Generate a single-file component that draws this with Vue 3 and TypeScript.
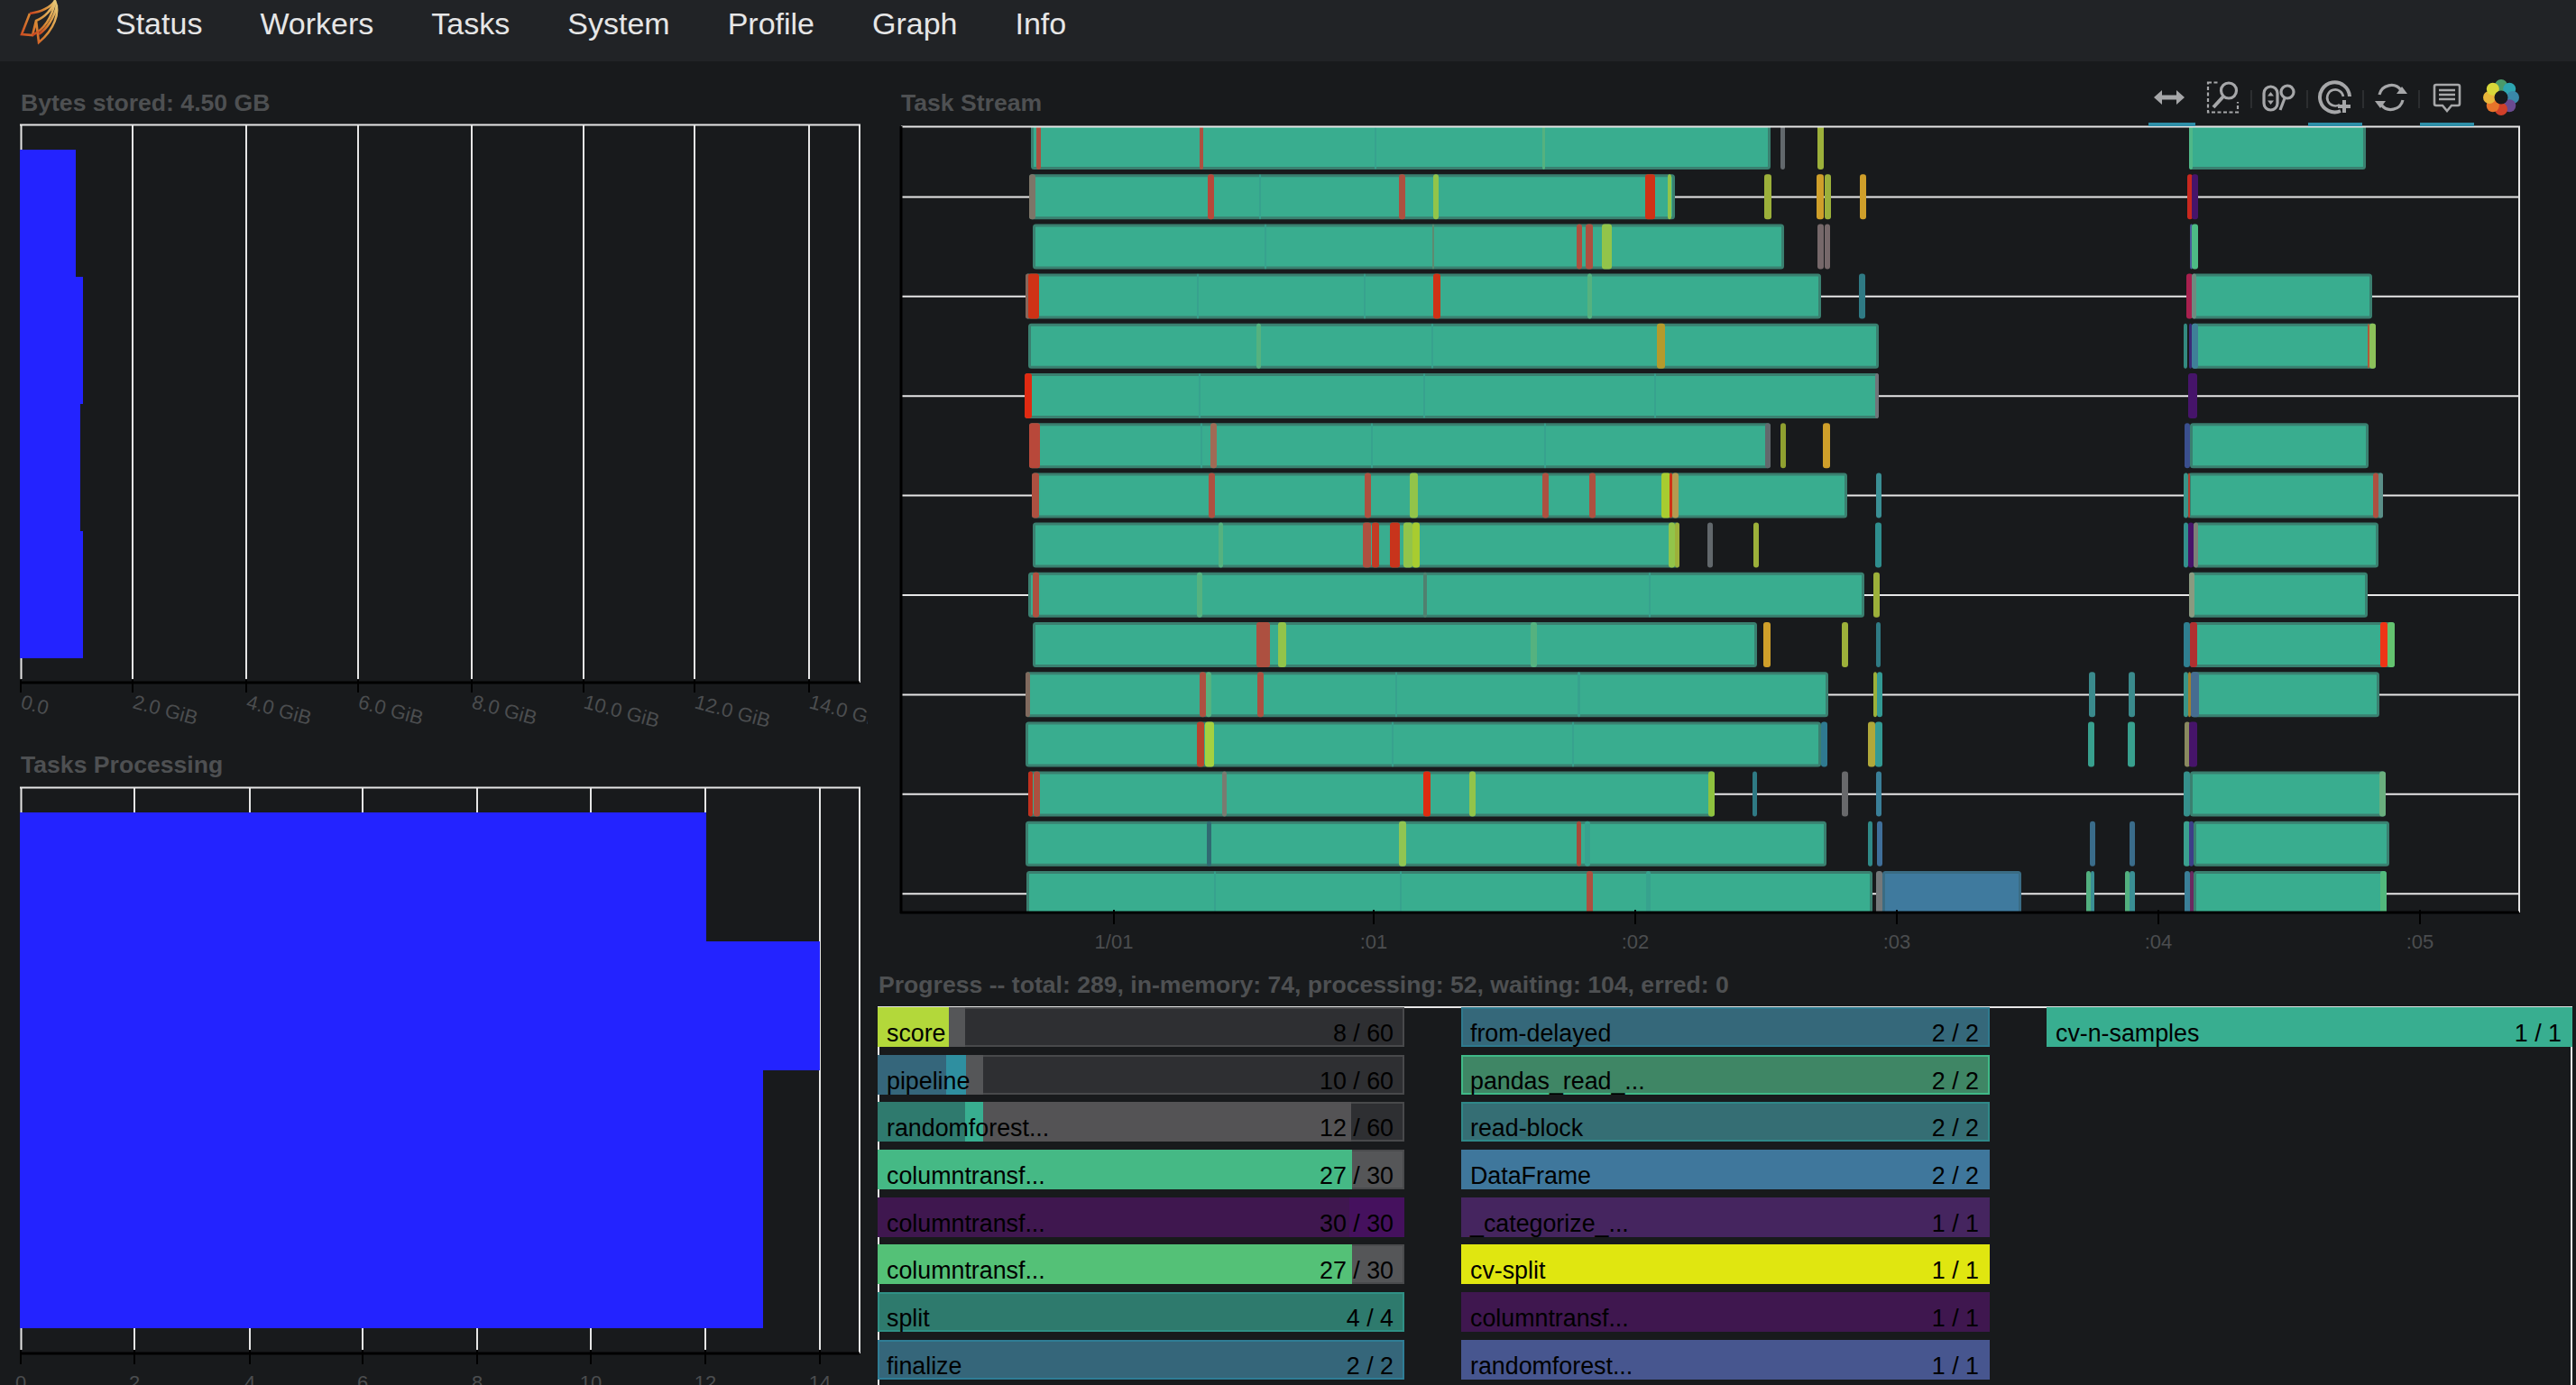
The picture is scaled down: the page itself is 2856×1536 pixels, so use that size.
<script setup lang="ts">
type Seg = [number, number, string, string?]
type Fill = [number, string]
interface Bar {
  name: string
  count: string
  track: string
  edge: string
  fills?: Fill[]
}

const links = ['Status', 'Workers', 'Tasks', 'System', 'Profile', 'Graph', 'Info']

// bytes + processing charts, x in page pixels
const bytesGrid = [147, 273, 397, 523, 647, 770, 897]
const bytesTicks = [
  { x: 23, label: '0.0' },
  { x: 147, label: '2.0 GiB' },
  { x: 273, label: '4.0 GiB' },
  { x: 397, label: '6.0 GiB' },
  { x: 523, label: '8.0 GiB' },
  { x: 647, label: '10.0 GiB' },
  { x: 770, label: '12.0 GiB' },
  { x: 897, label: '14.0 GiB' },
]
const bytesBars = [
  { y: 166, h: 141, r: 84 },
  { y: 307, h: 141, r: 92 },
  { y: 448, h: 141, r: 89 },
  { y: 589, h: 141, r: 92 },
]
const procTicks = [
  { x: 23, label: '0' },
  { x: 149, label: '2' },
  { x: 277, label: '4' },
  { x: 402, label: '6' },
  { x: 529, label: '8' },
  { x: 655, label: '10' },
  { x: 782, label: '12' },
  { x: 909, label: '14' },
]
const procBars = [
  { y: 901, h: 143, r: 783 },
  { y: 1044, h: 143, r: 909 },
  { y: 1187, h: 286, r: 846 },
]

// task stream colours
const T = '#39ad8f'
const E = '#3a8070'
const R = '#ad5040'
const RB = '#cf3216'
const L = '#92c44a'
const LB = '#a8cc30'
const O = '#9cb03a'
const OR = '#cf9f2a'
const G = '#62686c'
const P = '#46146a'
const F1 = '#37a28e'
const F2 = '#55b27f'
const DT = '#2f7a84'
const BT = '#3a7f98'

const stream: Seg[][] = [
  [
    [1143, 1963, T, E], [1149, 1154, R], [1330, 1334, R], [1524, 1526, F1], [1710, 1713, F2],
    [1974, 1979, G], [2015, 2022, O], [2427, 2623, T, E], [2427, 2431, '#4fb888'],
  ],
  [
    [1141, 1857, T, E], [1141, 1148, '#7d7568'], [1339, 1346, '#b8483a'], [1396, 1398, F1], [1551, 1558, R],
    [1589, 1595, L], [1824, 1835, RB], [1849, 1853, L], [1956, 1964, O], [2014, 2022, OR], [2023, 2030, O],
    [2062, 2069, OR], [2425, 2431, '#c8281e'], [2430, 2437, P],
  ],
  [
    [1145, 1978, T, E], [1402, 1404, F1], [1588, 1590, '#5e8a70'], [1748, 1754, R], [1758, 1766, R],
    [1776, 1787, L], [2015, 2022, '#76686a'], [2023, 2029, '#76686a'], [2428, 2431, '#4a5c9a'], [2430, 2437, '#4dbb85'],
  ],
  [
    [1137, 2019, T, E], [1137, 1142, '#86665a'], [1140, 1152, RB], [1327, 1329, F1], [1512, 1514, F1],
    [1589, 1597, RB], [1760, 1765, F2], [2061, 2068, DT], [2424, 2431, '#a8204e'], [2430, 2630, T, E], [2430, 2435, '#6f8a80'],
  ],
  [
    [1140, 2083, T, E], [1393, 1398, F2], [1587, 1589, F1], [1837, 1846, '#b59a2c'], [2421, 2425, '#338a80'],
    [2427, 2430, '#3c2a78'], [2430, 2634, T, E], [2430, 2437, '#3f7f98'], [2625, 2627, '#b05a3a'], [2627, 2634, '#8cc15a'],
  ],
  [
    [1136, 2083, T, E], [1136, 1144, '#e02a12'], [1329, 1331, F1], [1578, 1580, F1], [1834, 1836, F1],
    [2079, 2083, '#70757a'], [2426, 2436, P],
  ],
  [
    [1141, 1963, T, E], [1141, 1153, '#b8483a'], [1331, 1333, F1], [1342, 1349, '#a06a55'], [1520, 1522, F1],
    [1712, 1714, F1], [1957, 1963, G], [1974, 1980, '#8fa030'], [2021, 2029, OR], [2422, 2428, '#3a4f8e'],
    [2428, 2626, T, E],
  ],
  [
    [1144, 2048, T, E], [1144, 1152, R], [1340, 1347, R], [1513, 1520, R], [1563, 1572, L], [1710, 1717, R],
    [1762, 1769, R], [1842, 1852, LB], [1851, 1854, RB], [1854, 1861, '#b59a50'], [2080, 2086, '#3a8f94'],
    [2421, 2426, '#3a9488'], [2426, 2642, T, E], [2426, 2428, '#b04030'], [2631, 2637, R], [2637, 2642, '#5a8f88'],
  ],
  [
    [1145, 1862, T, E], [1351, 1356, F2], [1511, 1520, R], [1521, 1529, '#c23a25'], [1541, 1552, '#c8341c'],
    [1556, 1566, L], [1566, 1574, LB], [1850, 1857, L], [1857, 1862, O], [1893, 1899, G], [1944, 1950, O],
    [2079, 2086, '#2f8e8e'], [2421, 2426, '#33908c'], [2426, 2432, P], [2432, 2637, T, E], [2432, 2437, '#7d8078'],
  ],
  [
    [1140, 2067, T, E], [1145, 1152, R], [1327, 1333, F2], [1578, 1582, '#50806f'], [1828, 1830, F1],
    [2077, 2084, O], [2427, 2625, T, E], [2427, 2433, '#8a9a80'],
  ],
  [
    [1145, 1948, T, E], [1393, 1408, R], [1417, 1426, L], [1697, 1704, F2], [1955, 1963, OR], [2042, 2049, O],
    [2080, 2085, DT], [2421, 2428, '#2f7f90'], [2428, 2655, T, E], [2428, 2436, '#b03030'],
    [2639, 2647, '#ef3416'], [2647, 2655, '#63c36f'],
  ],
  [
    [1137, 2027, T, E], [1137, 1142, '#806a5e'], [1330, 1337, R], [1337, 1343, F2], [1394, 1401, R],
    [1547, 1549, F1], [1749, 1752, F1], [2077, 2081, O], [2081, 2087, '#339a94'], [2316, 2323, '#3a8a8c'],
    [2360, 2367, '#3a8a8c'], [2421, 2426, '#3a9488'], [2426, 2429, '#a08030'], [2429, 2638, T, E], [2429, 2438, '#466c90'],
  ],
  [
    [1137, 2019, T, E], [1327, 1335, '#b8432e'], [1336, 1346, '#a5d040'], [1543, 1545, F1], [1743, 1745, F1],
    [2019, 2026, '#2f7a90'], [2071, 2079, '#b0a83a'], [2079, 2087, '#339a94'], [2315, 2322, '#38a08e'],
    [2359, 2367, '#38a08e'], [2422, 2428, '#8a8a60'], [2427, 2436, P],
  ],
  [
    [1140, 1901, T, E], [1140, 1145, '#c0301e'], [1146, 1153, R], [1355, 1360, '#7a7a70'], [1578, 1586, '#dc2c10'],
    [1629, 1636, L], [1894, 1901, '#8fc23e'], [1943, 1948, DT], [2042, 2049, '#68696b'], [2080, 2086, BT],
    [2421, 2428, '#35908c'], [2428, 2645, T, E], [2638, 2645, '#6aaf7e'],
  ],
  [
    [1137, 2025, T, E], [1338, 1343, '#306a72'], [1551, 1559, '#90c552'], [1748, 1753, '#a84a3a'], [1757, 1763, F1],
    [2071, 2076, '#2f8a88'], [2081, 2087, '#3f6f9a'], [2317, 2323, '#3a6c8a'], [2361, 2367, '#3a6c8a'],
    [2421, 2428, '#3ba08e'], [2427, 2432, '#3c3f88'], [2432, 2649, T, E],
  ],
  [
    [1138, 2076, T, E], [1346, 1348, F1], [1552, 1554, F1], [1759, 1766, R], [1825, 1830, F1],
    [2080, 2087, '#74787a'], [2087, 2241, '#3f7a9e', '#3a6c84'], [2313, 2318, '#52b07f'], [2318, 2322, '#3a8f94'],
    [2356, 2361, '#52b07f'], [2361, 2367, '#3a8f94'], [2422, 2428, '#3a7f98'], [2428, 2432, '#6a2a60'],
    [2432, 2646, T, E], [2639, 2646, '#52b97c'],
  ],
]

const rowTop = (i: number) => 138 + i * 55.2
const rowLines = [218.4, 328.8, 439.2, 549.6, 660, 770.4, 880.8, 991.2]
const streamTicks = [
  { x: 1235, label: '1/01' },
  { x: 1523, label: ':01' },
  { x: 1813, label: ':02' },
  { x: 2103, label: ':03' },
  { x: 2393, label: ':04' },
  { x: 2683, label: ':05' },
]

const TRACK = '#2e2f32'
const TRACK_EDGE = '#48494b'
const GREY = '#555658'

const columns: Bar[][] = [
  [
    { name: 'score', count: '8 / 60', track: TRACK, edge: TRACK_EDGE, fills: [[79, '#b3d83a'], [18, GREY]] },
    { name: 'pipeline', count: '10 / 60', track: TRACK, edge: TRACK_EDGE, fills: [[76, '#35667b'], [22, '#2f8fa0'], [19, GREY]] },
    { name: 'randomforest...', count: '12 / 60', track: TRACK, edge: TRACK_EDGE, fills: [[97, '#2f7a6e'], [20, '#38ae90'], [408, '#545355']] },
    { name: 'columntransf...', count: '27 / 30', track: GREY, edge: '#4a4b4d', fills: [[526, '#45b985']] },
    { name: 'columntransf...', count: '30 / 30', track: '#45115e', edge: '#45115e', fills: [[523, '#3f174f']] },
    { name: 'columntransf...', count: '27 / 30', track: GREY, edge: '#4a4b4d', fills: [[526, '#54c177']] },
    { name: 'split', count: '4 / 4', track: '#2e7a6d', edge: '#2f9085' },
    { name: 'finalize', count: '2 / 2', track: '#35667a', edge: '#2f7d95' },
  ],
  [
    { name: 'from-delayed', count: '2 / 2', track: '#35687a', edge: '#2e7a8e' },
    { name: 'pandas_read_...', count: '2 / 2', track: '#3f8665', edge: '#3fb987' },
    { name: 'read-block', count: '2 / 2', track: '#356e74', edge: '#2f8888' },
    { name: 'DataFrame', count: '2 / 2', track: '#3f779c', edge: '#3f779c' },
    { name: '_categorize_...', count: '1 / 1', track: '#45255f', edge: '#45255f' },
    { name: 'cv-split', count: '1 / 1', track: '#e0e610', edge: '#e0e610' },
    { name: 'columntransf...', count: '1 / 1', track: '#3f174f', edge: '#3f174f' },
    { name: 'randomforest...', count: '1 / 1', track: '#47568f', edge: '#47568f' },
  ],
  [
    { name: 'cv-n-samples', count: '1 / 1', track: '#38ae90', edge: '#38ae90' },
  ],
]

// bokeh logo petals, clockwise from the top
const petalColors = ['#4a9a6a', '#2da5b0', '#3a88a8', '#6a4a90', '#d0402a', '#e8742a', '#e8b53a', '#d8d83a']
const petals = petalColors.map((color, i) => {
  const a = (i / petalColors.length) * Math.PI * 2 - Math.PI / 2
  return { color, cx: 20 + 13 * Math.cos(a), cy: 20 + 13 * Math.sin(a) }
})
</script>

<template>
  <div class="page">
    <nav class="nav">
      <div class="brand">
        <svg width="72" height="50" viewBox="0 0 72 50">
          <defs>
            <linearGradient id="flame" x1="0" y1="1" x2="1" y2="0">
              <stop offset="0" stop-color="#c8401e" />
              <stop offset="0.45" stop-color="#d98a35" />
              <stop offset="1" stop-color="#e6c878" />
            </linearGradient>
          </defs>
          <g fill="none" stroke="url(#flame)" stroke-width="2.6">
            <path d="M33 15 L24 38 L36 39 L40 23 C50 19 58 10 61 1 C67 14 60 33 43 47 L40 23" />
            <path d="M33 15 C46 13 56 8 61 1" />
            <path d="M36 39 C48 33 58 20 61 1" />
            <path d="M43 38 C52 32 60 20 63 6" />
          </g>
        </svg>
      </div>
      <a v-for="link in links" :key="link" class="nav-link">{{ link }}</a>
    </nav>

    <div class="main">
      <section class="left">
        <h2 class="title">Bytes stored: 4.50 GB</h2>
        <svg class="chart" width="962" height="704" viewBox="0 130 962 704">
          <line v-for="x in bytesGrid" :key="x" class="grid" :x1="x" :x2="x" y1="138" y2="753" />
          <line class="grid" x1="23.5" x2="23.5" y1="138" y2="753" />
          <line class="grid" x1="953" x2="953" y1="138" y2="757" />
          <line class="grid" x1="22" x2="954" y1="138.5" y2="138.5" />
          <rect v-for="b in bytesBars" :key="b.y" class="blue" x="22" :y="b.y" :width="b.r - 22" :height="b.h" />
          <line class="axis" x1="22" x2="953" y1="757" y2="757" />
          <g v-for="t in bytesTicks" :key="t.x">
            <line class="tick" :x1="t.x" :x2="t.x" y1="754" y2="768" />
            <text class="label" :x="t.x - 1" y="785" :transform="`rotate(15 ${t.x - 1} 785)`">{{ t.label }}</text>
          </g>
        </svg>

        <h2 class="title">Tasks Processing</h2>
        <svg class="chart" width="962" height="672" viewBox="0 864 962 672">
          <line v-for="t in procTicks.slice(1)" :key="t.x" class="grid" :x1="t.x" :x2="t.x" y1="873" y2="1497" />
          <line class="grid" x1="23.5" x2="23.5" y1="873" y2="1497" />
          <line class="grid" x1="953" x2="953" y1="873" y2="1501" />
          <line class="grid" x1="22" x2="954" y1="873.5" y2="873.5" />
          <rect v-for="b in procBars" :key="b.y" class="blue" x="22" :y="b.y" :width="b.r - 22" :height="b.h" />
          <line class="axis" x1="22" x2="953" y1="1501" y2="1501" />
          <g v-for="t in procTicks" :key="t.x">
            <line class="tick" :x1="t.x" :x2="t.x" y1="1497" y2="1513" />
            <text class="label middle" :x="t.x" y="1541">{{ t.label }}</text>
          </g>
        </svg>
      </section>

      <section class="right">
        <div class="stream">
          <h2 class="title stream-title">Task Stream</h2>
          <svg class="chart" width="1883" height="948" viewBox="973 130 1883 948">
            <defs>
              <clipPath id="plot">
                <rect x="999" y="140" width="1794" height="872" />
              </clipPath>
            </defs>
            <line v-for="y in rowLines" :key="y" class="grid" x1="1000" x2="2793" :y1="y" :y2="y" />
            <g clip-path="url(#plot)">
              <g v-for="(row, i) in stream" :key="i">
                <rect
                  v-for="(s, j) in row"
                  :key="j"
                  :x="s[3] ? s[0] + 1.5 : s[0]"
                  :y="s[3] ? rowTop(i) + 1.5 : rowTop(i)"
                  :width="s[3] ? s[1] - s[0] - 3 : s[1] - s[0]"
                  :height="s[3] ? 47 : 50"
                  :rx="s[3] ? 2 : 3"
                  :fill="s[2]"
                  :stroke="s[3] ?? 'none'"
                  :stroke-width="s[3] ? 3 : 0"
                />
              </g>
            </g>
            <line class="grid" x1="999" x2="2794" y1="140.5" y2="140.5" />
            <line class="grid" x1="2793" x2="2793" y1="140" y2="1012" />
            <line class="axis" x1="999" x2="999" y1="140" y2="1013" />
            <line class="axis" x1="998" x2="2793" y1="1012" y2="1012" />
            <g v-for="t in streamTicks" :key="t.x">
              <line class="tick" :x1="t.x" :x2="t.x" y1="1009" y2="1025" />
              <text class="label middle" :x="t.x" y="1052">{{ t.label }}</text>
            </g>
          </svg>

          <div class="toolbar">
            <div class="tool tool-pan active">
              <svg class="pan-icon" width="40" height="40" viewBox="0 0 40 40">
                <path class="solid" d="M3 20 L12 12 V17.5 H28 V12 L37 20 L28 28 V22.5 H12 V28 Z" />
              </svg>
            </div>
            <div class="tool tool-box">
              <svg width="40" height="40" viewBox="0 0 40 40">
                <rect class="ic thin" x="3" y="3.5" width="33" height="33" stroke-dasharray="4 2.5" />
                <rect class="erase" x="14" y="0" width="24" height="25" />
                <circle class="ic mid" cx="26" cy="12.5" r="8.5" />
                <path class="ic thick" d="M20 19 L9 31" />
              </svg>
            </div>
            <span class="sep"></span>
            <div class="tool">
              <svg width="40" height="40" viewBox="0 0 40 40">
                <rect class="ic mid" x="3" y="8" width="15" height="26" rx="7.5" />
                <path class="solid" d="M10.5 14 L14 18.5 H7 Z M10.5 28 L14 23.5 H7 Z" />
                <circle class="ic mid" cx="29" cy="14" r="7" />
                <path class="ic mid" d="M26 21 L21 34" />
              </svg>
            </div>
            <span class="sep"></span>
            <div class="tool active">
              <svg width="40" height="40" viewBox="0 0 40 40">
                <path class="ic thick" d="M26 35 A 16.5 16.5 0 1 1 36 19" />
                <path class="ic" d="M25 28 A 9 9 0 1 1 29 19" />
                <path class="ic thick" d="M30 23 V37 M23 30 H37" />
              </svg>
            </div>
            <span class="sep"></span>
            <div class="tool">
              <svg width="40" height="40" viewBox="0 0 40 40">
                <path class="ic mid" d="M7 17 A 13.5 13.5 0 0 1 31 12" />
                <path class="solid" d="M26 16 H38 L32 8 Z" />
                <path class="ic mid" d="M33 23 A 13.5 13.5 0 0 1 9 28" />
                <path class="solid" d="M2 24 H14 L8 32 Z" />
              </svg>
            </div>
            <span class="sep"></span>
            <div class="tool active">
              <svg width="40" height="40" viewBox="0 0 40 40">
                <path class="ic" d="M8 6 H32 a2 2 0 0 1 2 2 V27 a2 2 0 0 1 -2 2 H25 L20 35 L15 29 H8 a2 2 0 0 1 -2 -2 V8 a2 2 0 0 1 2 -2 Z" />
                <path class="ic" d="M11 12 H29 M11 17 H29 M11 22 H29" />
              </svg>
            </div>
            <div class="tool">
              <svg width="40" height="40" viewBox="0 0 40 40">
                <circle v-for="p in petals" :key="p.color" :cx="p.cx" :cy="p.cy" r="7" :fill="p.color" />
                <circle class="hole" cx="20" cy="20" r="7.5" />
              </svg>
            </div>
          </div>
        </div>

        <h2 class="title progress-title">Progress -- total: 289, in-memory: 74, processing: 52, waiting: 104, erred: 0</h2>
        <div class="progress">
          <div v-for="(col, c) in columns" :key="c" class="col">
            <div
              v-for="(bar, b) in col"
              :key="b"
              class="bar"
              :style="{ background: bar.track, borderColor: bar.edge }"
            >
              <div v-if="bar.fills" class="fills">
                <span
                  v-for="(f, k) in bar.fills"
                  :key="k"
                  :style="{ width: f[0] + 'px', background: f[1] }"
                ></span>
              </div>
              <span class="bar-text">{{ bar.name }}</span>
              <span class="bar-text">{{ bar.count }}</span>
            </div>
          </div>
        </div>
      </section>
    </div>
  </div>
</template>

<style>
html,
body {
  margin: 0;
  background: #181a1c;
  overflow: hidden;
}
</style>

<style scoped>
.page {
  width: 2856px;
  height: 1536px;
  overflow: hidden;
  background: #181a1c;
  font-family: "Liberation Sans", Arial, sans-serif;
}

.nav {
  display: flex;
  height: 68px;
  background: #212326;
}
.brand {
  width: 96px;
  flex: none;
}
.brand svg {
  display: block;
}
.nav-link {
  padding: 2px 32px 0;
  font-size: 34px;
  line-height: 48px;
  color: #e6e6e6;
}

.main {
  display: grid;
  grid-template-columns: 973px 1fr;
  height: 1468px;
}
.left,
.right {
  padding-top: 32px;
  min-width: 0;
}

.title {
  margin: 0;
  padding-left: 23px;
  height: 30px;
  font-size: 26.6px;
  line-height: 29px;
  font-weight: 700;
  color: #4e5052;
}
.chart {
  display: block;
}

.stream {
  position: relative;
}
.stream-title {
  padding-left: 26px;
}
.progress-title {
  padding-left: 1px;
}

.grid {
  stroke: #e6e6e6;
  stroke-width: 2;
}
.axis {
  stroke: #000;
  stroke-width: 3;
}
.tick {
  stroke: #000;
  stroke-width: 2;
}
.blue {
  fill: #2323ff;
}
.label {
  font-size: 22px;
  fill: #4b4d4f;
}
.middle {
  text-anchor: middle;
}

.toolbar {
  position: absolute;
  top: -12px;
  right: 53px;
  display: flex;
  align-items: flex-start;
}
.tool {
  display: flex;
  justify-content: center;
  box-sizing: border-box;
  width: 60px;
  height: 52px;
  border-bottom: 4px solid transparent;
}
.tool.active {
  border-bottom-color: #2e8fa8;
}
.tool-pan {
  width: 52px;
}
.pan-icon {
  margin-left: -6px;
}
.tool-box {
  width: 61px;
}
.sep {
  width: 2px;
  height: 20px;
  margin-top: 12px;
  background: #2c2e30;
}
.ic {
  fill: none;
  stroke: #a6a7a9;
  stroke-width: 2.6;
}
.ic.thin {
  stroke-width: 2.2;
}
.ic.mid {
  stroke-width: 3.2;
}
.ic.thick {
  stroke-width: 4;
}
.solid {
  fill: #a6a7a9;
}
.erase,
.hole {
  fill: #181a1c;
}

.progress {
  display: grid;
  grid-template-columns: 584px 586px 583px;
  column-gap: 63px;
  width: 1879px;
  height: 420px;
  margin-top: 8px;
  padding-top: 1px;
  box-sizing: border-box;
  box-shadow: inset 2px 2px 0 #e6e6e6, inset -2px 0 0 #e6e6e6;
}
.col {
  display: flex;
  flex-direction: column;
  gap: 8.7px;
}
.bar {
  position: relative;
  display: flex;
  justify-content: space-between;
  align-items: flex-end;
  box-sizing: border-box;
  height: 44px;
  padding: 0 10px 0 8px;
  border: 2px solid;
}
.fills {
  position: absolute;
  inset: -2px;
  display: flex;
}
.fills span {
  flex: none;
}
.bar-text {
  position: relative;
  font-size: 26.8px;
  line-height: 26px;
  color: #000;
}
</style>
